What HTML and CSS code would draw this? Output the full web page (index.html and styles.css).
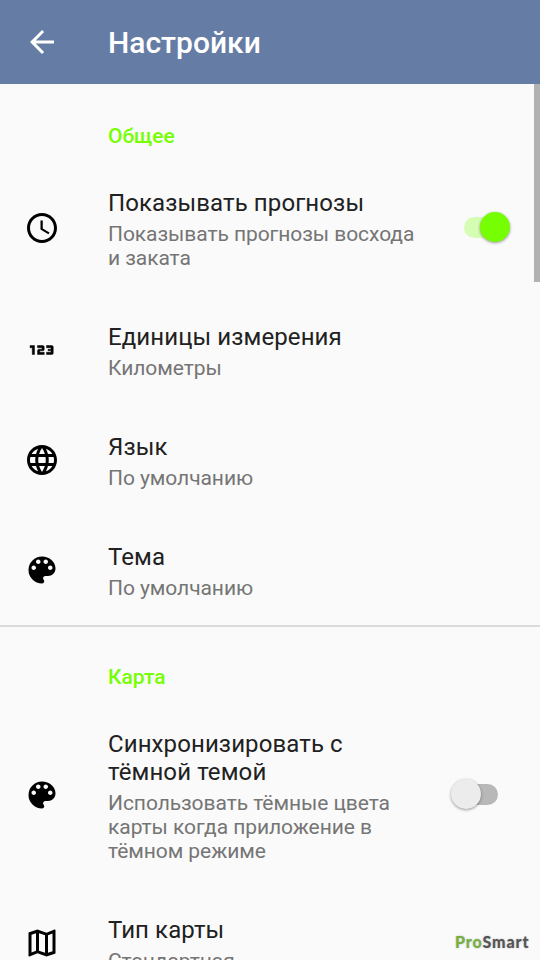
FILE: index.html
```
<!DOCTYPE html>
<html lang="ru">
<head>
<meta charset="utf-8">
<title>Настройки</title>
<link rel="stylesheet" href="styles.css">
</head>
<body>
<svg class="symbols" aria-hidden="true">
  <symbol id="palette" viewBox="0 0 24 24"><path d="M12 3a9 9 0 0 0 0 18c.83 0 1.5-.67 1.5-1.5 0-.39-.15-.74-.39-1.01-.23-.26-.38-.61-.38-.99 0-.83.67-1.5 1.5-1.5H16c2.76 0 5-2.24 5-5 0-4.42-4.03-8-9-8zm-5.5 9c-.83 0-1.5-.67-1.5-1.5S5.67 9 6.5 9 8 9.67 8 10.500 7.330 12 6.500 12zm3-4C8.670 8 8 7.330 8 6.500S8.670 5 9.500 5s1.500.67 1.500 1.500S10.330 8 9.500 8zm5 0c-.83 0-1.500-.67-1.500-1.500S13.670 5 14.500 5s1.500.67 1.500 1.500S15.330 8 14.500 8zm3 4c-.83 0-1.500-.67-1.500-1.500S16.670 9 17.500 9s1.500.67 1.500 1.500-.67 1.500-1.500 1.500z"/></symbol>
</svg>
<div class="screen">
  <header class="bar">
    <svg class="icon" viewBox="0 0 24 24"><path d="M20 11H7.830l5.590-5.590L12 4l-8 8 8 8 1.410-1.410L7.830 13H20v-2z"/></svg>
    <h1>Настройки</h1>
  </header>
  <main>
    <section>
      <h2>Общее</h2>
      <div class="row">
        <svg class="icon" viewBox="0 0 24 24"><path d="M11.990 2C6.470 2 2 6.480 2 12s4.470 10 9.990 10C17.520 22 22 17.520 22 12S17.520 2 11.990 2zM12 20c-4.420 0-8-3.580-8-8s3.580-8 8-8 8 3.580 8 8-3.580 8-8 8zm.5-13H11v6l5.250 3.150.75-1.230-4.500-2.670z"/></svg>
        <div class="text"><h3>Показывать прогнозы</h3><p>Показывать прогнозы восхода<br>и заката</p></div>
        <div class="switch on"><span class="thumb"></span></div>
      </div>
      <div class="row">
        <svg class="icon digits" viewBox="0 0 24 24"><path d="M7 15H5.500v-4.500H4V9h3v6zM13.500 13.500h-3v-1h2a1 1 0 0 0 1-1V10a1 1 0 0 0-1-1H9v1.500h3v1h-2a1 1 0 0 0-1 1V15h4.500v-1.500zM19.500 14v-4a1 1 0 0 0-1-1H15v1.500h3v1h-2v1h2v1h-3V15h3.500a1 1 0 0 0 1-1z"/></svg>
        <div class="text"><h3>Единицы измерения</h3><p>Километры</p></div>
      </div>
      <div class="row">
        <svg class="icon" viewBox="0 0 24 24"><path d="M11.990 2C6.470 2 2 6.480 2 12s4.470 10 9.990 10C17.520 22 22 17.520 22 12S17.520 2 11.990 2zm6.930 6h-2.950c-.32-1.250-.78-2.450-1.380-3.560 1.840.63 3.370 1.910 4.330 3.560zM12 4.040c.83 1.200 1.480 2.530 1.910 3.960h-3.820c.43-1.430 1.080-2.760 1.910-3.960zM4.260 14C4.100 13.360 4 12.690 4 12s.1-1.360.26-2h3.380c-.08.66-.14 1.320-.14 2s.06 1.340.14 2H4.260zm.82 2h2.950c.32 1.250.78 2.450 1.380 3.560-1.840-.63-3.370-1.900-4.330-3.560zm2.950-8H5.080c.96-1.660 2.490-2.930 4.330-3.560C8.810 5.550 8.350 6.750 8.030 8zM12 19.960c-.83-1.200-1.480-2.530-1.910-3.960h3.820c-.43 1.430-1.080 2.760-1.910 3.960zM14.340 14H9.660c-.09-.66-.16-1.320-.16-2s.07-1.350.16-2h4.680c.09.65.16 1.320.16 2s-.07 1.340-.16 2zm.25 5.560c.6-1.110 1.060-2.310 1.380-3.560h2.950c-.96 1.650-2.490 2.930-4.330 3.560zM16.360 14c.08-.66.14-1.320.14-2s-.06-1.340-.14-2h3.380c.16.64.26 1.310.26 2s-.1 1.360-.26 2h-3.380z"/></svg>
        <div class="text"><h3>Язык</h3><p>По умолчанию</p></div>
      </div>
      <div class="row">
        <svg class="icon"><use href="#palette"/></svg>
        <div class="text"><h3>Тема</h3><p>По умолчанию</p></div>
      </div>
    </section>
    <section class="divided">
      <h2>Карта</h2>
      <div class="row">
        <svg class="icon"><use href="#palette"/></svg>
        <div class="text"><h3>Синхронизировать с<br>тёмной темой</h3><p>Использовать тёмные цвета<br>карты когда приложение в<br>тёмном режиме</p></div>
        <div class="switch"><span class="thumb"></span></div>
      </div>
      <div class="row">
        <svg class="icon" viewBox="0 0 24 24"><path d="M20.500 3l-.16.030L15 5.100 9 3 3.360 4.900c-.21.070-.36.250-.36.480V20.500c0 .28.220.5.500.5l.16-.030L9 18.900l6 2.100 5.640-1.900c.21-.070.36-.25.36-.48V3.500c0-.28-.22-.5-.5-.5zM10 5.470l4 1.400v11.660l-4-1.400V5.470zM5 6.460l3-1.010v11.700l-3 1.160V6.460zm14 11.080l-3 1.010V6.860l3-1.160v11.840z"/></svg>
        <div class="text"><h3>Тип карты</h3><p>Стандартная</p></div>
      </div>
    </section>
  </main>
  <div class="scrollbar"></div>
  <div class="watermark"><span>Pro</span>Smart</div>
</div>
</body>
</html>
```
FILE: styles.css
```
* { box-sizing: border-box; }
body { margin: 0; overflow: hidden; background: #fafafa; font-family: Roboto, sans-serif; }
h1, h2, h3, p { margin: 0; }
.symbols { position: absolute; width: 0; height: 0; }
.screen { position: relative; height: 960px; overflow: hidden; }
.bar { display: flex; align-items: center; gap: 48px; height: 84px; padding: 0 24px; background: #657ca5; color: #fff; }
.bar h1 { font-size: 30px; font-weight: 500; line-height: 36px; padding-top: 2px; }
.icon { flex: none; width: 36px; height: 36px; fill: currentColor; }
.digits { stroke: currentColor; stroke-width: .3; }
h2 { height: 77px; padding: 40px 0 0 108px; font-size: 21px; line-height: 24px; font-weight: 500; color: #76ff03; }
.divided { box-shadow: inset 0 2px #dadada; }
.row { display: flex; align-items: center; padding: 28px 24px 25px; color: #000; }
.row .icon { margin: -3px 48px 0 0; }
.text { flex: 1; white-space: nowrap; }
h3 { font-size: 24px; line-height: 28px; font-weight: 400; letter-spacing: .1px; color: #212121; }
p { margin-top: 5px; font-size: 21px; line-height: 24px; letter-spacing: -.07px; color: #757575; }
.switch { position: relative; width: 34px; height: 21px; margin: -4px 18px 0 0; border-radius: 11px; background: #b8b8b8; }
.thumb { position: absolute; left: -13px; top: -5px; width: 30px; height: 30px; border-radius: 50%; background: #ececec; box-shadow: 0 1px 3px rgba(0, 0, 0, .4); }
.switch.on { background: #d6fdb4; }
.on .thumb { left: 16px; background: #76ff03; }
.scrollbar { position: absolute; right: 0; top: 84px; width: 6px; height: 198px; background: #b2b2b2; }
.watermark { position: absolute; left: 455px; top: 933px; font: 900 16px/18px Lato, sans-serif; letter-spacing: .9px; color: #555; text-shadow: 0 0 2px #bbb; }
.watermark span { color: #76b043; }
```
